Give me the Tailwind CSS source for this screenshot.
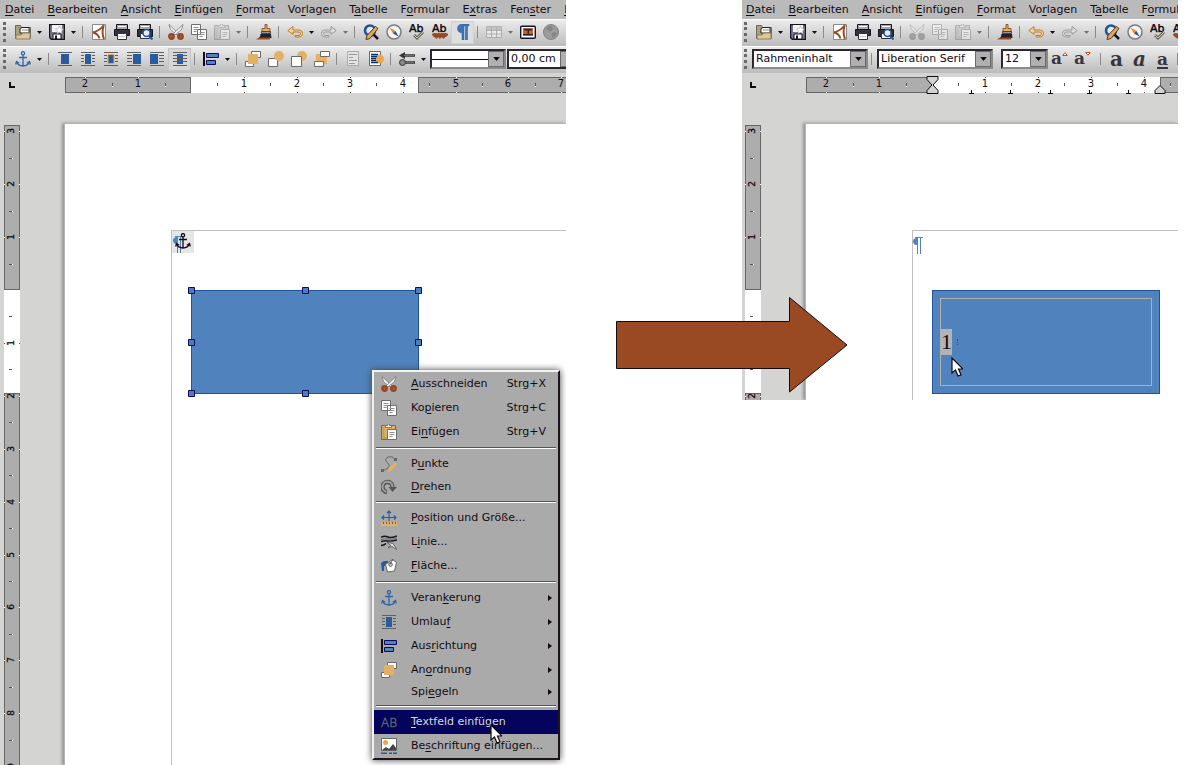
<!DOCTYPE html>
<html lang="de">

<head>
    <meta charset="UTF-8">
    <meta name="viewport" content="width=device-width, initial-scale=1">
    <title>Textfeld einfügen</title>
    <script src="https://cdn.jsdelivr.net/npm/@tailwindcss/browser@4"></script>
</head>

<body class="bg-white font-['DejaVu_Sans',sans-serif] text-[11px] text-[#140a12]">

    <!-- icon library -->
    <svg class="hidden" xmlns="http://www.w3.org/2000/svg">
        <symbol id="drop" viewBox="0 0 5 3"><path d="M0 0h5L2.500 3z" fill="#140a12" /></symbol>
        <symbol id="sub" viewBox="0 0 4 6"><path d="M0 0v6l4-3z" fill="#140a12" /></symbol>
        <symbol id="open" viewBox="0 0 16 16">
            <path d="M.5 14.500V1.500h5l1 2h9v11z" fill="#a8a37c" stroke="#6b6a58" />
            <path d="M5 9V4.500l2-1h7V9z" fill="#fff" stroke="#222" /><path d="M7 6h6" stroke="#888" />
            <path d="M1 15v-4h5l2-2h7v6z" fill="#e2c796" stroke="#8b8063" />
        </symbol>
        <symbol id="save" viewBox="0 0 16 16">
            <path d="M.5.5h15v15h-13l-2-2z" fill="#77788a" stroke="#191320" stroke-width="1.400" />
            <path d="M3 1h10v7H3z" fill="#f2f2f2" /><path d="M4 10h8v5H4z" fill="#fff" stroke="#191320" />
            <path d="M6 11.500h2V15H6z" fill="#191320" />
            <path d="M10.500 2l1.200 2.600 2.800.3-2 2 .5 2.800-2.500-1.400L8 9.700l.5-2.800-2-2 2.800-.3z" fill="#fff" stroke="#999" stroke-width=".5" />
        </symbol>
        <symbol id="pdf" viewBox="0 0 16 16">
            <path d="M1.500.5h13v15h-13z" fill="#fff" stroke="#8a8a8a" />
            <path d="M13 1Q9 6.500 2 8.500q5 1 6.500 6M12.500 2q-2 7 .5 13" fill="none" stroke="#9a4a22" stroke-width="2" />
        </symbol>
        <symbol id="print" viewBox="0 0 16 16">
            <path d="M2.500.5h11v5h-11z" fill="#a9a9a9" stroke="#191320" /><path d="M4 2.500h8" stroke="#fff" />
            <path d="M.5 5.500h15v6h-3v-2h-9v2h-3z" fill="#35303b" stroke="#191320" />
            <path d="M3.500 9.500h9v6h-9z" fill="#f7f7f7" stroke="#35303b" /><path d="M5 12.500h6" stroke="#ccc" />
        </symbol>
        <symbol id="preview" viewBox="0 0 16 16">
            <path d="M2.500.5h11v5h-11z" fill="#a9a9a9" stroke="#191320" /><path d="M4 2.500h8" stroke="#fff" />
            <path d="M.5 5.500h15v7h-3v-3h-9v3h-3z" fill="#35303b" stroke="#191320" />
            <path d="M3.500 9.500h9v5h-9z" fill="#f7f7f7" stroke="#35303b" />
            <circle cx="9.500" cy="9" r="3.500" fill="#e8eef8" stroke="#235596" stroke-width="1.500" />
            <path d="M12 12l3.500 3.500" stroke="#235596" stroke-width="2" />
        </symbol>
        <symbol id="cut" viewBox="0 0 16 16">
            <path d="M1 .5l1.500 5L9 11l1.500-1.500z" fill="#f4f4f4" stroke="#777" stroke-width=".8" />
            <path d="M15 .5l-1.500 5L7 11 5.500 9.500z" fill="#f4f4f4" stroke="#777" stroke-width=".8" />
            <circle cx="3.500" cy="12.500" r="2.200" fill="#a9694d" stroke="#9a4520" stroke-width="2.400" />
            <circle cx="12.500" cy="12.500" r="2.200" fill="#a9694d" stroke="#9a4520" stroke-width="2.400" />
        </symbol>
        <symbol id="copy" viewBox="0 0 16 16">
            <path d="M.5.5h9v10h-9zM6.500 5.500h9v10h-9z" fill="#fff" stroke="#6e6e6e" />
            <path d="M2.500 3.500h5M2.500 5.500h4M2.500 7.500h3M8.500 8.500h5M8.500 10.500h5M8.500 12.500h3" stroke="#8c8c8c" />
        </symbol>
        <symbol id="paste" viewBox="0 0 16 16">
            <path d="M.5 1.500h14v14H.5z" fill="#e4b063" stroke="#9a5a33" /><path d="M2.500 3v11h4" fill="none" stroke="#b8a060" stroke-width="2" />
            <path d="M4.500 3.500v-2h2V0h2v1.500h2v2z" fill="#eee" stroke="#666" stroke-width=".8" />
            <path d="M6.500 5.500h9v10h-9z" fill="#fff" stroke="#6e6e6e" />
            <path d="M8.500 8.500h5M8.500 10.500h5M8.500 12.500h3" stroke="#8c8c8c" />
        </symbol>
        <symbol id="brush" viewBox="0 0 16 16">
            <path d="M9 .5h2v4h3v3H6v-3h3z" fill="#e4b063" stroke="#8a5a33" />
            <path d="M5.500 7.500h9v2h-9z" fill="#999" stroke="#444" /><path d="M4.500 10h10.500l.5 4H2.500q2-1 2-4z" fill="#252028" />
            <path d="M0 15.500q2-2 5-2h9v2z" fill="#9a4a22" />
        </symbol>
        <symbol id="undo" viewBox="0 0 16 16">
            <path d="M6 6V2.500L.8 6.500 6 10.500V8h6q1.500 0 1.500 1.500T12 11.500H8V13h4.500q3-.5 3-3.500T12.500 6z" fill="#f0d5a0" stroke="#c07a28" />
        </symbol>
        <symbol id="redo" viewBox="0 0 16 16">
            <path d="M10 6V2.500l5.200 4-5.200 4V8H4q-1.500 0-1.500 1.500T4 11.500h4V13H3.500q-3-.5-3-3.500t3-3.500z" fill="#ddd" stroke="#9a9a9a" />
        </symbol>
        <symbol id="find" viewBox="0 0 16 16">
            <circle cx="7" cy="6.500" r="5" fill="#dfe8f3" stroke="#235596" stroke-width="2.600" />
            <path d="M10.500 10.500l4.500 4.500" stroke="#191320" stroke-width="2.500" />
            <path d="M3 15.500l1-4L12.500 2.500l2.500 2L7 14.500z" fill="#e4a94f" stroke="#4a3730" />
        </symbol>
        <symbol id="compass" viewBox="0 0 16 16">
            <circle cx="8" cy="8" r="7" fill="#f3f3f3" stroke="#7b7b7b" stroke-width="1.500" />
            <path d="M3.500 3.500L9.500 7 7 9.500z" fill="#d88b31" /><path d="M12.500 12.500L7 9.500 9.500 7z" fill="#235596" />
        </symbol>
        <symbol id="spell" viewBox="0 0 16 16">
            <text x="0" y="8" font-family="DejaVu Sans" font-size="11" stroke="#140a12" stroke-width=".4">Ab</text>
            <path d="M5 11l3 3 6-6" fill="none" stroke="#6b6b55" stroke-width="3" /><path d="M5 11l3 3 6-6" fill="none" stroke="#c9cbb4" />
        </symbol>
        <symbol id="autospell" viewBox="0 0 16 16">
            <text x="0" y="8" font-family="DejaVu Sans" font-size="11" stroke="#140a12" stroke-width=".4">Ab</text>
            <path d="M1 12q2-2 3.500 0 2-2 3.500 0 2-2 3.500 0 2-2 3.500 0" fill="none" stroke="#9a4520" stroke-width="4" />
        </symbol>
        <symbol id="pilcrow" viewBox="0 0 16 16">
            <path d="M14 0H7Q2.500.5 2.500 4.500T7 9v7h2V2h1.500v14h2V2H14z" fill="#3f74b3" stroke="#2b5c9c" stroke-width=".5" />
        </symbol>
        <symbol id="mark" viewBox="0 0 10 17">
            <path d="M4 1Q0 1 0 4.500T4 8z" fill="#5083bd" /><path d="M2 .5h8M4.500.5V17M7.500.5V17" fill="none" stroke="#5083bd" />
        </symbol>
        <symbol id="table" viewBox="0 0 16 16">
            <path d="M.5 2.500h15v11H.5z" fill="#fff" stroke="#888" /><path d="M1 3h14v3H1z" fill="#aaa" />
            <path d="M.5 6.500h15M.5 10h15M5.500 2.500v11M10.500 2.500v11" stroke="#888" />
        </symbol>
        <symbol id="picture" viewBox="0 0 16 16">
            <rect x=".7" y="2.200" width="14.600" height="12" rx="1" fill="#fff" stroke="#191320" stroke-width="1.400" />
            <path d="M3 4.500h10v7H3z" fill="#c8622c" /><path d="M3 4.500h10l-2 2H5zM7.500 6h1.500v5h-1.500zM3 10h10v1.500H3z" fill="#33242a" />
        </symbol>
        <symbol id="globe" viewBox="0 0 16 16">
            <circle cx="8" cy="8" r="7.500" fill="#9b9b9b" stroke="#838383" /><path d="M3 4q5-4 7 0-1 4-4 3t-3-3M9 9q4-2 5 1l-4 4q-2-2-1-5" fill="#858585" />
        </symbol>
        <symbol id="anchor" viewBox="0 0 16 16">
            <g fill="none" stroke="currentColor" stroke-width="1.300">
                <circle cx="8" cy="2.200" r="1.600" /><path d="M8 4v11M4 6.500h8M1.500 11q1.500 3.700 6.500 4 5-.3 6.500-4" />
                <path d="M.7 13.500l.8-3 2.700 1.700M15.300 13.500l-.8-3-2.700 1.700" />
            </g>
        </symbol>
        <symbol id="wrap-none" viewBox="0 0 16 16">
            <path d="M1 1.500h14M1 14.500h14" stroke="#5f5f5f" /><path d="M4 3h8v10H4z" fill="#2a5c9d" />
        </symbol>
        <symbol id="wrap" viewBox="0 0 16 16">
            <path d="M1 1.500h14M1 14.500h14M1 4.500h3M1 7.500h3M1 10.500h3M12 4.500h3M12 7.500h3M12 10.500h3" stroke="#5f5f5f" /><path d="M5 3h6v10H5z" fill="#2a5c9d" />
        </symbol>
        <symbol id="wrap-opt" viewBox="0 0 16 16">
            <path d="M1 1.500h14M1 14.500h14M1 4.500h3M1 7.500h3M1 10.500h3M12 4.500h3M12 7.500h3M12 10.500h3" stroke="#5f5f5f" /><path d="M5 3.500h6v9H5z" fill="#2a5c9d" stroke="#e4a94f" />
        </symbol>
        <symbol id="wrap-left" viewBox="0 0 16 16">
            <path d="M1 1.500h14M1 14.500h14M1 4.500h5M1 7.500h5M1 10.500h5" stroke="#5f5f5f" /><path d="M7 3h8v10H7z" fill="#2a5c9d" />
        </symbol>
        <symbol id="wrap-right" viewBox="0 0 16 16">
            <path d="M1 1.500h14M1 14.500h14M10 4.500h5M10 7.500h5M10 10.500h5" stroke="#5f5f5f" /><path d="M1 3h8v10H1z" fill="#2a5c9d" />
        </symbol>
        <symbol id="wrap-thru" viewBox="0 0 16 16">
            <path d="M5 3h6v10H5z" fill="#2a5c9d" /><path d="M1 1.500h14M1 14.500h14M1 4.500h14M1 7.500h14M1 10.500h14" stroke="#5f5f5f" />
        </symbol>
        <symbol id="align" viewBox="0 0 16 16">
            <path d="M1 1v14" stroke="#140a12" stroke-width="2" /><path d="M3.500 2.500h12v4h-12zM3.500 9.500h9v4h-9z" fill="#5083bd" stroke="#0a0a5c" />
        </symbol>
        <symbol id="front" viewBox="0 0 16 16">
            <path d="M6.500.5h9v6h-9zM.5 10.500h8v5h-8z" fill="#fff" stroke="#6a6a6a" /><path d="M3 3h10v10H3z" fill="#e4b063" />
        </symbol>
        <symbol id="forward" viewBox="0 0 16 16">
            <path d="M.5 7.500h9v8h-9z" fill="#fff" stroke="#6a6a6a" /><circle cx="11" cy="5" r="5" fill="#e4b063" />
        </symbol>
        <symbol id="backward" viewBox="0 0 16 16">
            <circle cx="11" cy="5" r="5" fill="#e4b063" /><path d="M.5 5.500h10v10H.5z" fill="#fff" stroke="#6a6a6a" />
        </symbol>
        <symbol id="back" viewBox="0 0 16 16">
            <path d="M2 3h11v10H2z" fill="#e4b063" /><path d="M6.500.5h9v5h-9zM.5 10.500h9v5h-9z" fill="#fff" stroke="#6a6a6a" />
        </symbol>
        <symbol id="to-front" viewBox="0 0 16 16">
            <path d="M2.500.5h11v14h-11z" fill="#e4e4e4" stroke="#aaa" /><path d="M4 3.500h8M4 6.500h4M4 9.500h8M4 12.500h6" stroke="#999" />
        </symbol>
        <symbol id="to-back" viewBox="0 0 16 16">
            <path d="M1.500.5h11v14h-11z" fill="#fff" stroke="#666" /><circle cx="11.500" cy="8" r="4.500" fill="#e4a94f" />
            <path d="M3 3.500h7M3 5.500h6M3 7.500h5M3 9.500h5M3 11.500h7" stroke="#0d2f66" stroke-width="1.300" />
        </symbol>
        <symbol id="ends" viewBox="0 0 16 16">
            <path d="M5 4.500h11M5 11.500h11" stroke="#333" stroke-width="2.500" /><path d="M0 4.500L6 1v7z" fill="#333" />
            <path d="M5 4.500h10M5 11.500h10" stroke="#888" stroke-width=".7" /><circle cx="3.500" cy="11.500" r="3" fill="#888" stroke="#333" />
        </symbol>
        <symbol id="points" viewBox="0 0 16 16">
            <path d="M14 3Q11-.5 7 1 3 3.500 6 6.500 10 9 7 12q-2 2-6 2.500" fill="none" stroke="#666" />
            <path d="M13 2h3v3h-3zM0 13h3v3H0z" fill="#666" /><path d="M7 15.500l1-4 6-5 2 2-5.500 6z" fill="#e4b063" />
        </symbol>
        <symbol id="rotate" viewBox="0 0 16 16">
            <path d="M6 13A5 5 0 1 1 11.500 8" fill="none" stroke="#555" stroke-width="4.500" />
            <path d="M5.500 12.700A5 5 0 1 1 11.500 8" fill="none" stroke="#a0a0a0" stroke-width="2" /><path d="M7.500 8h8.500L11.500 13z" fill="#555" />
        </symbol>
        <symbol id="position" viewBox="0 0 16 16">
            <path d="M8 1v10M1 7.500h14M6 3l2-2 2 2M3 5.500l-2 2 2 2M13 5.500l2 2-2 2" fill="none" stroke="#2a5c9d" stroke-width="1.200" />
            <path d="M0 12h16v4H0z" fill="#e4b063" /><path d="M2.500 12v2M5.500 12v2M8.500 12v2M11.500 12v2M14.500 12v2" stroke="#7a5a2c" />
        </symbol>
        <symbol id="line" viewBox="0 0 16 16">
            <path d="M0 3.500q3-2 7-.5t9-1M0 7.500q3-1 7-.5t9-1M0 11.500q3 0 5-2" fill="none" stroke="#191320" stroke-width="1.500" />
            <path d="M0 5.500q4-1.500 7-.5t9-1" fill="none" stroke="#666" /><path d="M6 8.500l6 1 4 6-5-3-4 1 3-2z" fill="#ddd" stroke="#555" stroke-width=".8" />
        </symbol>
        <symbol id="area" viewBox="0 0 16 16">
            <path d="M0 5l3-2h4v5H3v5H1z" fill="#2a5c9d" /><path d="M4.500 6.500l7-5 4 3-2 8.500-7 1z" fill="#fff" stroke="#666" />
            <circle cx="9.500" cy="6.500" r="1.800" fill="#ddd" stroke="#555" /><path d="M9 6.500Q11 3 12 1" fill="none" stroke="#555" />
        </symbol>
        <symbol id="textbox" viewBox="0 0 16 16">
            <text x="0" y="12.500" font-family="DejaVu Sans" font-size="12" font-weight="200" fill="none" stroke="#5d6670" stroke-width=".6">AB</text>
        </symbol>
        <symbol id="caption" viewBox="0 0 16 16">
            <path d="M.5.5h15v12H.5z" fill="#fff" stroke="#666" /><circle cx="4.500" cy="4.500" r="2.500" fill="#e4a94f" />
            <path d="M1 12l4-3 3 2 4-5 3 4v2z" fill="#444" /><path d="M0 15.200h6M8 15.200h3M12 15.200h4" stroke="#2a5c9d" stroke-width="1.600" />
        </symbol>
        <symbol id="cursor" viewBox="0 0 12 20">
            <path d="M1 1v15l3.500-3 2.500 6 3-1.200L7.500 12H12z" fill="#fff" stroke="#140a12" stroke-width="1.200" />
        </symbol>
    </svg>

    <main class="grid min-h-screen grid-cols-[566fr_176fr_436fr] items-start pr-[22px]">

        <!-- left window: shape selected, context menu open -->
        <section class="relative min-h-screen overflow-hidden bg-[#d4d4d2]">
            <nav class="flex h-[19px] items-center gap-[13px] bg-[#bababa] pl-[5px] leading-4 underline-offset-2">
                <a href="#"><u>D</u>atei</a><a href="#"><u>B</u>earbeiten</a><a href="#"><u>A</u>nsicht</a><a href="#"><u>E</u>infügen</a><a href="#"><u>F</u>ormat</a><a href="#">Vo<u>r</u>lagen</a><a href="#">T<u>a</u>belle</a><a href="#">F<u>o</u>rmular</a><a href="#">E<u>x</u>tras</a><a href="#">Fen<u>s</u>ter</a><a href="#"><u>H</u>ilfe</a>
            </nav>

            <div class="flex h-[27px] items-center overflow-hidden border-t border-white bg-linear-to-b from-[#ececec] to-[#bcbcbc] pb-0.5 [&>*]:shrink-0 [&>button]:grid [&>button]:h-[23px] [&>button]:place-items-center">
                <i class="ml-[3px] mr-[5px] h-5 w-[3px] border-l-3 border-dotted border-[#6a6a6a]"></i>
                <button class="w-[23px]" aria-label="Öffnen"><svg class="size-4"><use href="#open" /></svg></button>
                <button class="w-[11px]" aria-label="Zuletzt geöffnet"><svg class="h-[3px] w-[5px]"><use href="#drop" /></svg></button>
                <button class="w-[23px]" aria-label="Speichern"><svg class="size-4"><use href="#save" /></svg></button>
                <button class="w-[11px]" aria-label="Speichern-Optionen"><svg class="h-[3px] w-[5px]"><use href="#drop" /></svg></button>
                <i class="mx-[3px] h-3 w-0.5 border-l border-[#8a8a8a]"></i>
                <button class="w-[23px]" aria-label="PDF"><svg class="size-4"><use href="#pdf" /></svg></button>
                <button class="w-[23px]" aria-label="Drucken"><svg class="size-4"><use href="#print" /></svg></button>
                <button class="w-[23px]" aria-label="Druckvorschau"><svg class="size-4"><use href="#preview" /></svg></button>
                <i class="mx-[3px] h-3 w-0.5 border-l border-[#8a8a8a]"></i>
                <button class="w-[23px]" aria-label="Ausschneiden"><svg class="size-4"><use href="#cut" /></svg></button>
                <button class="w-[23px]" aria-label="Kopieren"><svg class="size-4"><use href="#copy" /></svg></button>
                <button class="w-[23px] opacity-40 grayscale" aria-label="Einfügen" disabled><svg class="size-4"><use href="#paste" /></svg></button>
                <button class="w-[11px] opacity-50" aria-label="Einfügen-Optionen"><svg class="h-[3px] w-[5px]"><use href="#drop" /></svg></button>
                <i class="mx-[3px] h-3 w-0.5 border-l border-[#8a8a8a]"></i>
                <button class="w-[23px]" aria-label="Format übertragen"><svg class="size-4"><use href="#brush" /></svg></button>
                <i class="mx-[3px] h-3 w-0.5 border-l border-[#8a8a8a]"></i>
                <button class="w-[23px]" aria-label="Rückgängig"><svg class="size-4"><use href="#undo" /></svg></button>
                <button class="w-[11px]" aria-label="Rückgängig-Liste"><svg class="h-[3px] w-[5px]"><use href="#drop" /></svg></button>
                <button class="w-[23px]" aria-label="Wiederherstellen" disabled><svg class="size-4"><use href="#redo" /></svg></button>
                <button class="w-[11px] opacity-50" aria-label="Wiederherstellen-Liste"><svg class="h-[3px] w-[5px]"><use href="#drop" /></svg></button>
                <i class="mx-[3px] h-3 w-0.5 border-l border-[#8a8a8a]"></i>
                <button class="w-[23px]" aria-label="Suchen"><svg class="size-4"><use href="#find" /></svg></button>
                <button class="w-[23px]" aria-label="Navigator"><svg class="size-4"><use href="#compass" /></svg></button>
                <button class="w-[23px]" aria-label="Rechtschreibung"><svg class="size-4"><use href="#spell" /></svg></button>
                <button class="w-[23px]" aria-label="Automatische Rechtschreibung"><svg class="size-4"><use href="#autospell" /></svg></button>
                <button class="w-[23px] border border-[#d0d0d0] bg-[#dedede]" aria-label="Steuerzeichen"><svg class="size-4"><use href="#pilcrow" /></svg></button>
                <i class="mx-[3px] h-3 w-0.5 border-l border-[#8a8a8a]"></i>
                <button class="w-[23px] opacity-50" aria-label="Tabelle" disabled><svg class="size-4"><use href="#table" /></svg></button>
                <button class="w-[11px] opacity-50" aria-label="Tabellengröße"><svg class="h-[3px] w-[5px]"><use href="#drop" /></svg></button>
                <button class="w-[23px]" aria-label="Bild"><svg class="size-4"><use href="#picture" /></svg></button>
                <button class="w-[23px]" aria-label="Hyperlink" disabled><svg class="size-4"><use href="#globe" /></svg></button>
            </div>

            <div class="flex h-[27px] items-center overflow-hidden border-t border-white bg-linear-to-b from-[#ececec] to-[#bcbcbc] pb-0.5 [&>*]:shrink-0 [&>button]:grid [&>button]:h-[23px] [&>button]:place-items-center">
                <i class="ml-[3px] mr-[5px] h-5 w-[3px] border-l-3 border-dotted border-[#6a6a6a]"></i>
                <button class="w-[23px] text-[#2f66a8]" aria-label="Verankerung"><svg class="size-4"><use href="#anchor" /></svg></button>
                <button class="w-[11px]" aria-label="Verankerung wählen"><svg class="h-[3px] w-[5px]"><use href="#drop" /></svg></button>
                <i class="mx-[3px] h-3 w-0.5 border-l border-[#8a8a8a]"></i>
                <button class="w-[23px]" aria-label="Kein Umlauf"><svg class="size-4"><use href="#wrap-none" /></svg></button>
                <button class="w-[23px]" aria-label="Seitenumlauf"><svg class="size-4"><use href="#wrap" /></svg></button>
                <button class="w-[23px]" aria-label="Dynamischer Umlauf"><svg class="size-4"><use href="#wrap-opt" /></svg></button>
                <button class="w-[23px]" aria-label="Umlauf links"><svg class="size-4"><use href="#wrap-left" /></svg></button>
                <button class="w-[23px]" aria-label="Umlauf rechts"><svg class="size-4"><use href="#wrap-right" /></svg></button>
                <button class="w-[23px] border border-[#c4c4c4] bg-[#d6d6d6]" aria-label="Durchlauf"><svg class="size-4"><use href="#wrap-thru" /></svg></button>
                <i class="mx-[3px] h-3 w-0.5 border-l border-[#8a8a8a]"></i>
                <button class="w-[23px]" aria-label="Ausrichtung"><svg class="size-4"><use href="#align" /></svg></button>
                <button class="w-[11px]" aria-label="Ausrichtung wählen"><svg class="h-[3px] w-[5px]"><use href="#drop" /></svg></button>
                <i class="mx-[3px] h-3 w-0.5 border-l border-[#8a8a8a]"></i>
                <button class="w-[23px]" aria-label="Ganz nach vorn"><svg class="size-4"><use href="#front" /></svg></button>
                <button class="w-[23px]" aria-label="Weiter nach vorn"><svg class="size-4"><use href="#forward" /></svg></button>
                <button class="w-[23px]" aria-label="Weiter nach hinten"><svg class="size-4"><use href="#backward" /></svg></button>
                <button class="w-[23px]" aria-label="Ganz nach hinten"><svg class="size-4"><use href="#back" /></svg></button>
                <i class="mx-[3px] h-3 w-0.5 border-l border-[#8a8a8a]"></i>
                <button class="w-[23px]" aria-label="Vordergrund" disabled><svg class="size-4"><use href="#to-front" /></svg></button>
                <button class="w-[23px]" aria-label="Hintergrund"><svg class="size-4"><use href="#to-back" /></svg></button>
                <i class="mx-[3px] h-3 w-0.5 border-l border-[#8a8a8a]"></i>
                <button class="w-[23px]" aria-label="Linienenden"><svg class="size-4"><use href="#ends" /></svg></button>
                <button class="w-[11px]" aria-label="Linienende wählen"><svg class="h-[3px] w-[5px]"><use href="#drop" /></svg></button>
                <div class="relative ml-px flex h-5 w-[76px] items-stretch border-2 border-[#2b2630] border-r-[#8a8a8a] border-b-[#8a8a8a] bg-white">
                    <select class="min-w-0 flex-1 appearance-none" aria-label="Linienstil"><option></option></select>
                    <hr class="pointer-events-none absolute left-0 top-2 w-[56px] border-[#140a12]">
                    <span class="pointer-events-none grid w-4 place-items-center border border-[#6a6a6a] bg-[#b0b0b0]"><svg class="h-1 w-[7px]"><use href="#drop" /></svg></span>
                </div>
                <div class="ml-px flex h-5 w-[68px] items-stretch border-2 border-[#2b2630] bg-white">
                    <input class="w-[51px] pl-0.5" aria-label="Linienbreite" value="0,00 cm">
                    <span class="flex-1 border border-[#6a6a6a] bg-[#b0b0b0]"></span>
                </div>
            </div>

            <div class="flex h-[50px] pt-[3px]">
                <div class="w-[65px] pl-[9px] pt-1.5"><i class="block size-1.5 border-b-2 border-l-2 border-[#140a12]"></i></div>
                <svg class="h-[18px] flex-1" data-ruler="h" data-start="0" data-zero="126" data-end="353" data-size="560"></svg>
            </div>

            <div class="flex">
                <div class="w-16 shrink-0 pl-1 pt-0.5"><svg class="h-[640px] w-4" data-ruler="v" data-start="0" data-zero="165" data-end="268" data-size="700"></svg></div>
                <div class="flex-1 border-l border-t border-[#b4b4b4] bg-white pl-[106px] pt-[106px] shadow-[-2px_0_3px_#909090]">
                    <div class="relative h-full border-l border-t border-[#c0c0c0]">
                        <!-- anchor marker -->
                        <div class="absolute left-0 top-0 size-[22px] bg-[#e6e6e6]">
                            <svg class="absolute left-px top-[5px] h-[17px] w-2.5"><use href="#mark" /></svg>
                            <svg class="absolute left-[3px] top-0.5 size-4 text-[#140a12]"><use href="#anchor" /></svg>
                        </div>
                        <!-- selected shape -->
                        <svg class="absolute left-4 top-14 h-[112px] w-[235px]" viewBox="0 0 235 112">
                            <path d="M3.500 3.500h227v103h-227z" fill="#5083bd" stroke="#20549a" />
                            <g fill="#4a7fbf" stroke="#0a0a5c">
                                <path d="M.5.5h6v6h-6zM114.500.5h6v6h-6zM227.500.5h6v6h-6zM.5 52.500h6v6h-6zM227.500 52.500h6v6h-6zM.5 103.500h6v6h-6zM114.500 103.500h6v6h-6z" />
                            </g>
                        </svg>
                    </div>
                </div>
            </div>

            <!-- context menu -->
            <div role="menu" class="absolute left-[372px] top-[370px] w-[188px] border-2 border-[#f2f2f2] border-r-[#1c151b] border-b-[#1c151b] bg-[#aaaaaa] shadow-[0_0_7px_#404040] [&>button]:flex [&>button]:h-6 [&>button]:w-full [&>button]:items-center [&>button]:text-left [&>button]:whitespace-nowrap [&>button]:underline-offset-2 [&>hr]:mx-0.5 [&>hr]:my-[3px] [&>hr]:h-0.5 [&>hr]:border-t [&>hr]:border-[#555] [&>hr]:bg-white">
                <button role="menuitem"><svg class="ml-[7px] mr-3.5 size-4"><use href="#cut" /></svg><span class="flex-1"><u>A</u>usschneiden</span><span class="pr-3">Strg+X</span></button>
                <button role="menuitem"><svg class="ml-[7px] mr-3.5 size-4"><use href="#copy" /></svg><span class="flex-1">Ko<u>p</u>ieren</span><span class="pr-3">Strg+C</span></button>
                <button role="menuitem"><svg class="ml-[7px] mr-3.5 size-4"><use href="#paste" /></svg><span class="flex-1">Ei<u>n</u>fügen</span><span class="pr-3">Strg+V</span></button>
                <hr>
                <button role="menuitem"><svg class="ml-[7px] mr-3.5 size-4"><use href="#points" /></svg><span>P<u>u</u>nkte</span></button>
                <button role="menuitem" class="-mb-0.5 pb-0.5"><svg class="ml-[7px] mr-3.5 size-4"><use href="#rotate" /></svg><span><u>D</u>rehen</span></button>
                <hr>
                <button role="menuitem"><svg class="ml-[7px] mr-3.5 size-4"><use href="#position" /></svg><span><u>P</u>osition und Größe...</span></button>
                <button role="menuitem"><svg class="ml-[7px] mr-3.5 size-4"><use href="#line" /></svg><span>L<u>i</u>nie...</span></button>
                <button role="menuitem"><svg class="ml-[7px] mr-3.5 size-4"><use href="#area" /></svg><span><u>F</u>läche...</span></button>
                <hr>
                <button role="menuitem"><svg class="ml-[7px] mr-3.5 size-4 text-[#2f66a8]"><use href="#anchor" /></svg><span class="flex-1">Veran<u>k</u>erung</span><svg class="mr-1.5 h-1.5 w-1"><use href="#sub" /></svg></button>
                <button role="menuitem"><svg class="ml-[7px] mr-3.5 size-4"><use href="#wrap" /></svg><span class="flex-1">Umlau<u>f</u></span><svg class="mr-1.5 h-1.5 w-1"><use href="#sub" /></svg></button>
                <button role="menuitem"><svg class="ml-[7px] mr-3.5 size-4"><use href="#align" /></svg><span class="flex-1">Aus<u>r</u>ichtung</span><svg class="mr-1.5 h-1.5 w-1"><use href="#sub" /></svg></button>
                <button role="menuitem"><svg class="ml-[7px] mr-3.5 size-4"><use href="#front" /></svg><span class="flex-1">An<u>o</u>rdnung</span><svg class="mr-1.5 h-1.5 w-1"><use href="#sub" /></svg></button>
                <button role="menuitem" class="-mb-1 pb-1"><span class="flex-1 pl-[37px]">Spi<u>e</u>geln</span><svg class="mr-1.5 h-1.5 w-1"><use href="#sub" /></svg></button>
                <hr>
                <button role="menuitem" class="bg-[#04045c] text-[#d8d8d8]"><svg class="ml-[7px] mr-3.5 size-4"><use href="#textbox" /></svg><span><u>T</u>extfeld einfügen</span></button>
                <button role="menuitem"><svg class="ml-[7px] mr-3.5 size-4"><use href="#caption" /></svg><span>Be<u>s</u>chriftung einfügen...</span></button>
            </div>
            <svg class="absolute left-[490px] top-[724px] h-5 w-3"><use href="#cursor" /></svg>
        </section>

        <!-- arrow between the windows -->
        <div class="z-10 min-w-0 pl-[50px] pt-[296px]">
            <svg class="h-[98px] w-[232px] max-w-none" viewBox="0 0 232 98">
                <path d="M.5 25.500h173v-24l57.500 47.500-57.500 47v-23.500H.5z" fill="#9a4a22" stroke="#140a12" />
            </svg>
        </div>

        <!-- right window: text box in edit mode -->
        <section class="overflow-hidden bg-[#d4d4d2]">
            <nav class="flex h-[19px] items-center gap-[13px] bg-[#bababa] pl-1 leading-4 underline-offset-2">
                <a href="#"><u>D</u>atei</a><a href="#"><u>B</u>earbeiten</a><a href="#"><u>A</u>nsicht</a><a href="#"><u>E</u>infügen</a><a href="#"><u>F</u>ormat</a><a href="#">Vo<u>r</u>lagen</a><a href="#">T<u>a</u>belle</a><a href="#">F<u>o</u>rmular</a>
            </nav>

            <div class="flex h-[27px] items-center overflow-hidden border-t border-white bg-linear-to-b from-[#ececec] to-[#bcbcbc] pb-0.5 [&>*]:shrink-0 [&>button]:grid [&>button]:h-[23px] [&>button]:place-items-center">
                <i class="ml-0.5 mr-[5px] h-5 w-[3px] border-l-3 border-dotted border-[#6a6a6a]"></i>
                <button class="w-[23px]" aria-label="Öffnen"><svg class="size-4"><use href="#open" /></svg></button>
                <button class="w-[11px]" aria-label="Zuletzt geöffnet"><svg class="h-[3px] w-[5px]"><use href="#drop" /></svg></button>
                <button class="w-[23px]" aria-label="Speichern"><svg class="size-4"><use href="#save" /></svg></button>
                <button class="w-[11px]" aria-label="Speichern-Optionen"><svg class="h-[3px] w-[5px]"><use href="#drop" /></svg></button>
                <i class="mx-[3px] h-3 w-0.5 border-l border-[#8a8a8a]"></i>
                <button class="w-[23px]" aria-label="PDF"><svg class="size-4"><use href="#pdf" /></svg></button>
                <button class="w-[23px]" aria-label="Drucken"><svg class="size-4"><use href="#print" /></svg></button>
                <button class="w-[23px]" aria-label="Druckvorschau"><svg class="size-4"><use href="#preview" /></svg></button>
                <i class="mx-[3px] h-3 w-0.5 border-l border-[#8a8a8a]"></i>
                <button class="w-[23px] opacity-40 grayscale" aria-label="Ausschneiden" disabled><svg class="size-4"><use href="#cut" /></svg></button>
                <button class="w-[23px] opacity-40" aria-label="Kopieren" disabled><svg class="size-4"><use href="#copy" /></svg></button>
                <button class="w-[23px] opacity-40 grayscale" aria-label="Einfügen" disabled><svg class="size-4"><use href="#paste" /></svg></button>
                <button class="w-[11px] opacity-50" aria-label="Einfügen-Optionen"><svg class="h-[3px] w-[5px]"><use href="#drop" /></svg></button>
                <i class="mx-[3px] h-3 w-0.5 border-l border-[#8a8a8a]"></i>
                <button class="w-[23px]" aria-label="Format übertragen"><svg class="size-4"><use href="#brush" /></svg></button>
                <i class="mx-[3px] h-3 w-0.5 border-l border-[#8a8a8a]"></i>
                <button class="w-[23px]" aria-label="Rückgängig"><svg class="size-4"><use href="#undo" /></svg></button>
                <button class="w-[11px]" aria-label="Rückgängig-Liste"><svg class="h-[3px] w-[5px]"><use href="#drop" /></svg></button>
                <button class="w-[23px]" aria-label="Wiederherstellen" disabled><svg class="size-4"><use href="#redo" /></svg></button>
                <button class="w-[11px] opacity-50" aria-label="Wiederherstellen-Liste"><svg class="h-[3px] w-[5px]"><use href="#drop" /></svg></button>
                <i class="mx-[3px] h-3 w-0.5 border-l border-[#8a8a8a]"></i>
                <button class="w-[23px]" aria-label="Suchen"><svg class="size-4"><use href="#find" /></svg></button>
                <button class="w-[23px]" aria-label="Navigator"><svg class="size-4"><use href="#compass" /></svg></button>
                <button class="w-[23px]" aria-label="Rechtschreibung"><svg class="size-4"><use href="#spell" /></svg></button>
                <button class="w-[23px]" aria-label="Automatische Rechtschreibung"><svg class="size-4"><use href="#autospell" /></svg></button>
            </div>

            <div class="flex h-[27px] items-center overflow-hidden border-t border-white bg-linear-to-b from-[#ececec] to-[#bcbcbc] pb-0.5 [&>*]:shrink-0 [&>button]:h-[23px]">
                <i class="ml-0.5 mr-[5px] h-5 w-[3px] border-l-3 border-dotted border-[#6a6a6a]"></i>
                <div class="flex h-5 w-[116px] items-stretch border-2 border-[#2b2630] border-r-[#8a8a8a] border-b-[#8a8a8a] bg-white">
                    <select class="min-w-0 flex-1 appearance-none pl-0.5" aria-label="Absatzvorlage"><option>Rahmeninhalt</option></select>
                    <span class="pointer-events-none grid w-4 place-items-center border border-[#6a6a6a] bg-[#b0b0b0]"><svg class="h-1 w-[7px]"><use href="#drop" /></svg></span>
                </div>
                <i class="mx-[3px] h-3 w-0.5 border-l border-[#8a8a8a]"></i>
                <div class="ml-px flex h-5 w-[116px] items-stretch border-2 border-[#2b2630] border-r-[#8a8a8a] border-b-[#8a8a8a] bg-white">
                    <select class="min-w-0 flex-1 appearance-none pl-0.5" aria-label="Schriftart"><option>Liberation Serif</option></select>
                    <span class="pointer-events-none grid w-4 place-items-center border border-[#6a6a6a] bg-[#b0b0b0]"><svg class="h-1 w-[7px]"><use href="#drop" /></svg></span>
                </div>
                <div class="ml-2 flex h-5 w-[47px] items-stretch border-2 border-[#2b2630] border-r-[#8a8a8a] border-b-[#8a8a8a] bg-white">
                    <select class="min-w-0 flex-1 appearance-none pl-0.5" aria-label="Schriftgröße"><option>12</option></select>
                    <span class="pointer-events-none grid w-4 place-items-center border border-[#6a6a6a] bg-[#b0b0b0]"><svg class="h-1 w-[7px]"><use href="#drop" /></svg></span>
                </div>
                <button class="ml-[3px] flex w-[23px] font-['DejaVu_Serif',serif] text-[17px] leading-5 font-bold text-[#3a353c]" aria-label="Schrift vergrößern">a<svg class="mt-1 h-1 w-1.5" viewBox="0 0 6 4"><path d="M.7 3.500L3 .7l2.300 2.800z" fill="#fff" stroke="#b0552a" /></svg></button>
                <button class="flex w-[23px] font-['DejaVu_Serif',serif] text-[17px] leading-5 font-bold text-[#3a353c]" aria-label="Schrift verkleinern">a<svg class="mt-1 h-1 w-1.5" viewBox="0 0 6 4"><path d="M.7.5L3 3.300 5.300.5z" fill="#fff" stroke="#b0552a" /></svg></button>
                <i class="mx-[3px] h-3 w-0.5 border-l border-[#8a8a8a]"></i>
                <button class="w-[23px] font-['DejaVu_Serif',serif] text-xl leading-5 font-bold text-[#3a353c]" aria-label="Fett">a</button>
                <button class="w-[23px] font-['DejaVu_Serif',serif] text-xl leading-5 font-bold text-[#3a353c] italic" aria-label="Kursiv">a</button>
                <button class="w-[23px] font-['DejaVu_Serif',serif] text-[17px] leading-5 font-bold text-[#3a353c]" aria-label="Unterstrichen"><span class="inline-block border-b-2 border-[#3a353c] leading-4">a</span></button>
                <i class="mx-[3px] h-3 w-0.5 border-l border-[#8a8a8a]"></i>
            </div>

            <div class="flex h-[50px] pt-[3px]">
                <div class="w-16 pl-2 pt-1.5"><i class="block size-1.5 border-b-2 border-l-2 border-[#140a12]"></i></div>
                <svg class="h-[18px] flex-1" data-ruler="h" data-start="0" data-zero="126" data-end="354" data-size="420" data-indents="1"></svg>
            </div>

            <div class="flex">
                <div class="w-[63px] shrink-0 pl-[3px] pt-0.5"><svg class="h-[275px] w-4" data-ruler="v" data-start="0" data-zero="165" data-end="268" data-size="300"></svg></div>
                <div class="flex-1 border-l border-t border-[#b4b4b4] bg-white pl-[106px] pt-[106px] shadow-[-2px_0_3px_#909090]">
                    <div class="relative h-full border-l border-t border-[#c0c0c0]">
                        <svg class="absolute left-0 top-1.5 h-[17px] w-2.5"><use href="#mark" /></svg>
                        <div class="absolute left-[19px] top-[59px] h-[104px] w-[228px] border border-[#20549a] bg-[#5083bd] p-[7px]">
                            <div class="flex h-full items-center border border-[#b0b0b0]">
                                <span class="bg-[#b3b3b3] font-['Liberation_Serif',serif] text-[22px] leading-[26px]">1</span>
                                <i class="ml-[3px] h-1.5 w-[3px] self-center border-r border-dotted border-[#20549a]"></i>
                            </div>
                        </div>
                        <svg class="absolute left-[38px] top-[126px] h-5 w-3"><use href="#cursor" /></svg>
                    </div>
                </div>
            </div>
        </section>
    </main>

    <script>
        // one centimetre on the rulers, in px
        const CM = 52.9;

        const drawRuler = (svg) => {
            const vertical = svg.dataset.ruler === 'v';
            const start = +svg.dataset.start;
            const zero = +svg.dataset.zero;
            const end = +svg.dataset.end;
            const size = +svg.dataset.size;
            const top = vertical ? 0 : 1;
            const rect = (a, b, fill, stroke) => vertical
                ? `<rect x="0.5" y="${a + 0.5}" width="15" height="${b - a - 1}" fill="${fill}" stroke="${stroke}"/>`
                : `<rect x="${a + 0.5}" y="${top + 0.5}" width="${b - a - 1}" height="15" fill="${fill}" stroke="${stroke}"/>`;
            const tick = (pos, from, len, color) => vertical
                ? `<path d="M${from} ${pos + 0.5}h${len}" stroke="${color}"/>`
                : `<path d="M${pos + 0.5} ${from + top}v${len}" stroke="${color}"/>`;

            let out = rect(start, zero, '#adadad', '#666') + rect(zero, end, '#fff', '#fff') + rect(end, size, '#adadad', '#666');
            for (let n = -4; n < 12; n++) {
                const pos = Math.round(zero + n * CM);
                const half = Math.round(zero + (n + 0.5) * CM);
                if (half > 0) {
                    out += tick(half, vertical ? 5 : 6, 3, '#555');
                    if (half < zero || half > end) out += tick(half, vertical ? 8 : 9, 1, '#fff');
                }
                if (n === 0 || pos < 0) continue;
                const color = pos < zero || pos > end ? '#fff' : '#555';
                out += tick(pos, 0, 1, color) + tick(pos, 15, 1, color);
                out += vertical
                    ? `<text transform="translate(10 ${pos}) rotate(-90)" text-anchor="middle" font-size="9" fill="#140a12" stroke="#140a12" stroke-width="0.3">${Math.abs(n)}</text>`
                    : `<text x="${pos}" y="11" text-anchor="middle" font-size="10" fill="#140a12">${Math.abs(n)}</text>`;
            }
            if (svg.dataset.indents) {
                // tab stops and paragraph indents
                for (const x of [165, 204, 244, 283, 322]) {
                    out += `<path d="M${x - 2} 17.5h5M${x + 0.5} 14v4" stroke="#140a12"/>`;
                }
                out += `<path d="M${zero - 5} 0.5h11v3l-5 5.500 5 5.500v3h-11v-3l5-5.500-5-5.500z" fill="#d4d4d2" stroke="#140a12"/>`;
                out += `<path d="M${end - 5} 17.5v-3l5-5 5 5v3z" fill="#d4d4d2" stroke="#140a12"/>`;
            }
            svg.innerHTML = out;
        }

        document.querySelectorAll('[data-ruler]').forEach(drawRuler);
    </script>
</body>

</html>
